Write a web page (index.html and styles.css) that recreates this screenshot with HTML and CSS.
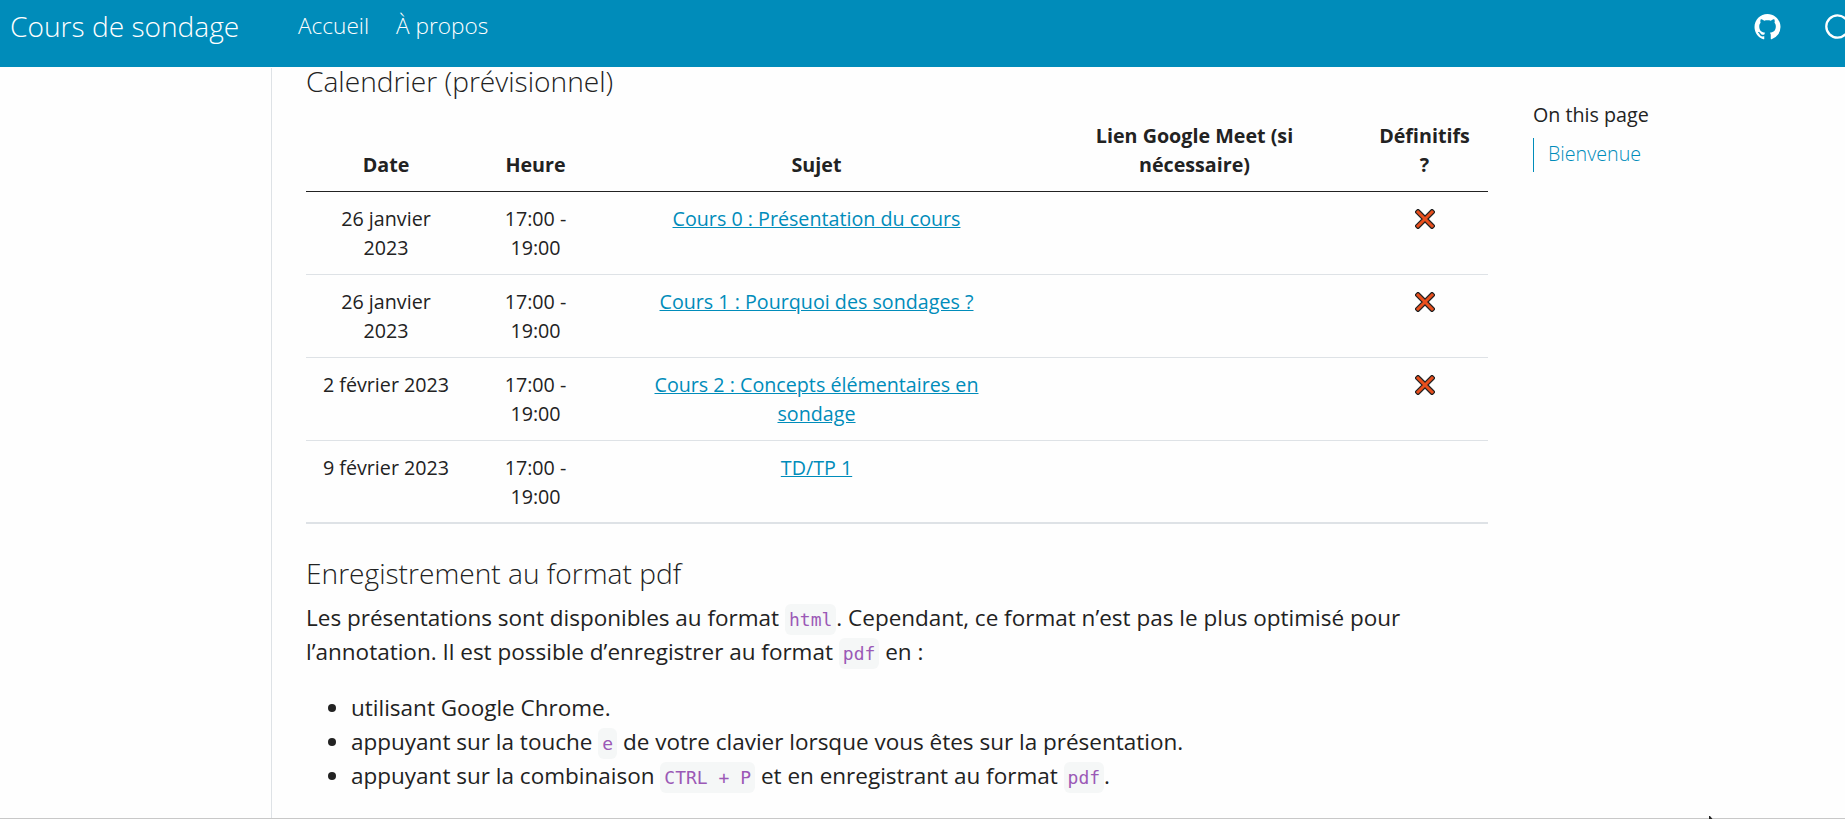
FILE: index.html
```html
<!DOCTYPE html>
<html lang="fr">
<head>
<meta charset="utf-8">
<title>Cours de sondage</title>
<link rel="stylesheet" href="styles.css">
</head>
<body>
<header class="navbar">
  <a class="brand">Cours de sondage</a>
  <nav class="menu"><a>Accueil</a><a>À propos</a></nav>
  <div class="tools">
    <svg class="github" viewBox="0 0 16 16"><path d="M8 0C3.58 0 0 3.58 0 8c0 3.54 2.29 6.53 5.47 7.59.4.07.55-.17.55-.38 0-.19-.01-.82-.01-1.49-2.01.37-2.53-.49-2.69-.94-.09-.23-.48-.94-.82-1.13-.28-.15-.68-.52-.01-.53.63-.01 1.08.58 1.23.82.72 1.21 1.87.87 2.33.66.07-.52.28-.87.51-1.07-1.78-.2-3.64-.89-3.64-3.95 0-.87.31-1.59.82-2.15-.08-.2-.36-1.02.08-2.12 0 0 .67-.21 2.2.82.64-.18 1.32-.27 2-.27s1.36.09 2 .27c1.53-1.04 2.2-.82 2.2-.82.44 1.1.16 1.92.08 2.12.51.56.82 1.27.82 2.15 0 3.07-1.87 3.75-3.65 3.95.29.25.54.73.54 1.48 0 1.07-.01 1.93-.01 2.2 0 .21.15.46.55.38A8.01 8.01 0 0 0 16 8c0-4.42-3.58-8-8-8z"/></svg>
    <svg class="search" viewBox="0 0 32 32"><circle cx="12.5" cy="12.5" r="11.2"/><path d="M21.5 21.5L30 30"/></svg>
  </div>
</header>
<div class="layout">
  <aside class="sidebar"></aside>
  <main class="content">
    <h3 class="title">Calendrier (prévisionnel)</h3>
    <table class="schedule">
      <colgroup><col class="c-date"><col class="c-hour"><col class="c-topic"><col class="c-link"><col class="c-final"></colgroup>
      <thead><tr><th>Date</th><th>Heure</th><th>Sujet</th><th>Lien Google Meet (si<br>nécessaire)</th><th>Définitifs<br>?</th></tr></thead>
      <tbody>
        <tr><td>26 janvier<br>2023</td><td>17:00 -<br>19:00</td><td><a>Cours 0 : Présentation du cours</a></td><td></td><td><svg class="cross" viewBox="0 0 20 20"><path class="edge" d="M3 3L17 17M17 3L3 17"/><path class="fill" d="M3 3L17 17M17 3L3 17"/></svg></td></tr>
        <tr><td>26 janvier<br>2023</td><td>17:00 -<br>19:00</td><td><a>Cours 1 : Pourquoi des sondages ?</a></td><td></td><td><svg class="cross" viewBox="0 0 20 20"><path class="edge" d="M3 3L17 17M17 3L3 17"/><path class="fill" d="M3 3L17 17M17 3L3 17"/></svg></td></tr>
        <tr><td>2 février 2023</td><td>17:00 -<br>19:00</td><td><a>Cours 2 : Concepts élémentaires en<br>sondage</a></td><td></td><td><svg class="cross" viewBox="0 0 20 20"><path class="edge" d="M3 3L17 17M17 3L3 17"/><path class="fill" d="M3 3L17 17M17 3L3 17"/></svg></td></tr>
        <tr><td>9 février 2023</td><td>17:00 -<br>19:00</td><td><a>TD/TP 1</a></td><td></td><td></td></tr>
      </tbody>
    </table>
    <h3 class="title second">Enregistrement au format pdf</h3>
    <p class="text">Les présentations sont disponibles au format <code>html</code>. Cependant, ce format n’est pas le plus optimisé pour<br>l’annotation. Il est possible d’enregistrer au format <code>pdf</code> en :</p>
    <ul class="list">
      <li>utilisant Google Chrome.</li>
      <li>appuyant sur la touche <code>e</code> de votre clavier lorsque vous êtes sur la présentation.</li>
      <li>appuyant sur la combinaison <code>CTRL + P</code> et en enregistrant au format <code>pdf</code>.</li>
    </ul>
  </main>
  <aside class="toc">
    <h2>On this page</h2>
    <a>Bienvenue</a>
  </aside>
</div>
<div class="bottom-line"></div>
<svg class="pointer" viewBox="0 0 4 3"><path d="M0 0h1l2.5 3H0z"/></svg>
</body>
</html>
```
FILE: styles.css
```css
* { box-sizing: border-box; }
body {
  margin: 0;
  height: 819px;
  overflow: hidden;
  display: flex;
  flex-direction: column;
  position: relative;
  background: #fefefe;
  color: #222;
  font-family: "Open Sans", sans-serif;
  font-size: 22.5px;
  line-height: 34px;
}
.navbar {
  flex: none;
  height: 67px;
  display: flex;
  align-items: flex-start;
  background: #008cba;
  color: #fff;
  font-weight: 300;
  overflow: hidden;
}
.brand { flex: none; width: 298px; padding: 8px 0 0 10px; font-size: 28.13px; line-height: 36px; white-space: nowrap; }
.menu { display: flex; gap: 27px; padding-top: 9px; font-size: 22.6px; }
.tools { flex: none; margin-left: auto; display: flex; padding-top: 14px; gap: 44px; margin-right: -12px; }
.github { width: 27px; height: 26px; fill: #fff; }
.search { width: 32px; height: 32px; fill: none; stroke: #fff; stroke-width: 2.3; }
.layout { flex: 1; min-height: 0; display: flex; }
.sidebar { width: 272px; margin-top: 1px; border-right: 1px solid #dee2e6; }
.content { width: 1216px; padding-left: 34px; }
.title { margin: -1px 0 0; font-size: 28.13px; font-weight: 300; line-height: 31px; }
.schedule {
  width: 1182px;
  margin-top: 19px;
  border-collapse: separate;
  border-spacing: 0;
  table-layout: fixed;
  text-align: center;
  font-size: 19.69px;
  line-height: 29.53px;
}
.c-date { width: 160px; }
.c-hour { width: 139px; }
.c-topic { width: 423px; }
.c-link { width: 333px; }
.c-final { width: 127px; }
.schedule th { padding: 4px 10px 11px; vertical-align: bottom; font-weight: 700; border-bottom: 1px solid #222; height: 76px; }
.schedule td { padding: 11.5px 10px 10px; vertical-align: top; height: 83px; border-bottom: 1px solid #dee2e6; }
.schedule tr:last-child td { border-bottom-width: 2px; }
.schedule a { color: #008cba; text-decoration: underline; }
.cross { width: 20px; height: 20px; display: block; margin: 5.5px auto 0; fill: none; stroke-linecap: square; }
.edge { stroke: #222; stroke-width: 5.4; }
.fill { stroke: #e94f1d; stroke-width: 3; }
.schedule thead th { border-bottom-color: #222; border-bottom-width: 1px; }
.second { margin-top: 34px; }
.text { margin: 12px 0 22px; white-space: nowrap; }
code {
  padding: 5px 4px;
  border-radius: 6px;
  background: #f5f7f7;
  color: #9b59b6;
  font-family: "DejaVu Sans Mono", monospace;
  font-size: 18px;
  line-height: 1;
}
.list { margin: 0; padding-left: 45px; white-space: nowrap; }
.toc { padding: 32px 0 0 45px; font-size: 19.69px; line-height: 32px; }
.toc h2 { margin: 0 0 7px; font-size: 19.69px; font-weight: 400; line-height: 32px; }
.toc a { display: block; height: 34px; padding-left: 14px; border-left: 1px solid #008cba; color: #008cba; font-weight: 300; }
.bottom-line { position: absolute; left: 0; right: 0; bottom: 0; height: 1px; background: #c8c8c8; }
.pointer { position: absolute; left: 1709px; bottom: 0; width: 4px; height: 3px; fill: #222; }
```
